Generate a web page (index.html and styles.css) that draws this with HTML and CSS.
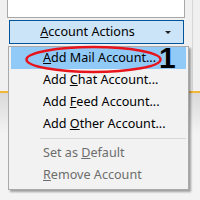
FILE: index.html
```html
<!DOCTYPE html>
<html>
<head>
<meta charset="utf-8">
<link rel="stylesheet" href="styles.css">
</head>
<body>
<div class="panel">
  <div class="list"></div>
  <div class="button"><span class="label"><u>A</u>ccount Actions</span><span class="arrow"></span></div>
</div>
<div class="footer"></div>
<div class="menu">
  <div class="item active"><u>A</u>dd Mail Account...</div>
  <div class="item">Add <u>C</u>hat Account...</div>
  <div class="item">Add <u>F</u>eed Account...</div>
  <div class="item">Add <u>O</u>ther Account...</div>
  <div class="sep"></div>
  <div class="item disabled">Set as <u>D</u>efault</div>
  <div class="item disabled"><u>R</u>emove Account</div>
</div>
<svg class="annot" width="200" height="200" viewBox="0 0 200 200"><ellipse cx="93.5" cy="59.5" rx="67" ry="12.5" fill="none" stroke="#e8141c" stroke-width="2.5"/></svg>
<div class="num">1</div>
</body>
</html>
```
FILE: styles.css
```css
html, body {
  margin: 0;
  padding: 0;
}
body {
  width: 200px;
  height: 200px;
  overflow: hidden;
  background: #f0f0f0;
  position: relative;
  font-family: "Noto Sans", "Open Sans", sans-serif;
  font-size: 12.6px;
  color: #000;
}
.panel {
  width: 193px;
  height: 91px;
  box-sizing: border-box;
  border-right: 1px solid #d6d6d6;
  overflow: hidden;
}
.list {
  margin: -1px 0 0 7px;
  width: 178px;
  height: 19px;
  box-sizing: border-box;
  background: #fff;
  border: 1px solid #a8a8a8;
}
.button {
  margin: 2px 0 0 9px;
  width: 175px;
  height: 24px;
  box-sizing: border-box;
  background: #cce4f7;
  border: 1px solid #005499;
  display: flex;
  align-items: center;
}
.label {
  flex: 1;
  text-align: center;
  line-height: 22px;
}
.arrow {
  width: 0;
  height: 0;
  border-left: 3px solid transparent;
  border-right: 3px solid transparent;
  border-top: 3px solid #222;
  margin-right: 12px;
  margin-top: 1px;
}
.footer {
  height: 109px;
  border-top: 2px solid #f2b632;
  background: linear-gradient(#d9d9d9, #f3f3f3 40px);
}
.menu {
  position: absolute;
  left: 8px;
  top: 46px;
  width: 181px;
  box-sizing: border-box;
  background: #f2f2f2;
  border: 1px solid #a9a9a9;
  padding: 0 2px 3px 2px;
  box-shadow: 2px 2px 2px rgba(0, 0, 0, 0.35);
}
.item {
  height: 22px;
  line-height: 22px;
  padding-left: 32px;
  white-space: nowrap;
}
.item.active {
  background: #91c9f7;
}
.item.disabled {
  color: #6d6d6d;
}
.sep {
  height: 1px;
  background: #d7d7d7;
  margin: 3px 0 3px 29px;
}
.annot {
  position: absolute;
  left: 0;
  top: 0;
}
.num {
  position: absolute;
  left: 159px;
  top: 41px;
  font-family: "Liberation Sans", Arial, sans-serif;
  font-weight: bold;
  font-size: 30px;
  line-height: 34px;
}
```
